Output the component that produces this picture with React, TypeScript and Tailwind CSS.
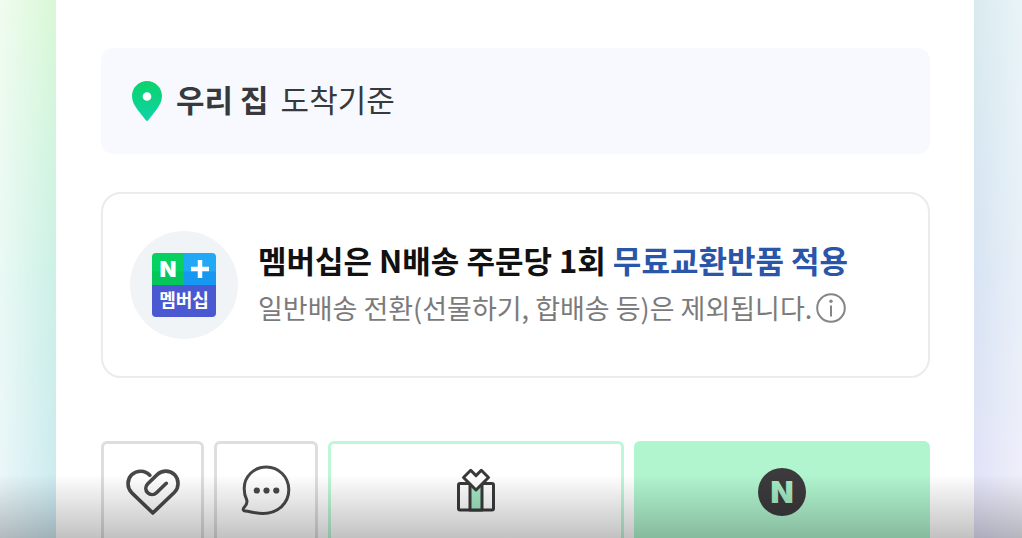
import React from "react";

function PinIcon() {
  return (
    <svg width="30" height="40" viewBox="0 0 30 40" aria-hidden="true" className="shrink-0">
      <defs>
        <linearGradient id="pin" x1="0" y1="0" x2="0" y2="1">
          <stop offset="0" stopColor="#0bd36c" />
          <stop offset="1" stopColor="#0fd3a8" />
        </linearGradient>
      </defs>
      <path
        fill="url(#pin)"
        d="M15 0C6.700 0 0 6.700 0 15c0 5 2.200 9 5.200 13.200L13.800 39.200a1.500 1.500 0 0 0 2.400 0L24.800 28.200C27.800 24 30 20 30 15 30 6.700 23.300 0 15 0Z"
      />
      <circle cx="15" cy="15.500" r="4.300" fill="#fff" />
    </svg>
  );
}

function InfoIcon() {
  return (
    <svg width="30" height="30" viewBox="0 0 30 30" fill="none" aria-hidden="true">
      <circle cx="15" cy="15" r="13.800" stroke="#858585" strokeWidth="2" />
      <circle cx="15" cy="8.200" r="1.700" fill="#858585" />
      <path d="M15 12.500v11" stroke="#858585" strokeWidth="2" />
    </svg>
  );
}

function HeartIcon() {
  return (
    <svg width="54" height="46" viewBox="0 0 54 46" fill="none" stroke="#484848" strokeWidth="3.600" strokeLinecap="round" strokeLinejoin="round" aria-hidden="true">
      <path d="M23.800 6.200C19 1.100 11 .9 5.800 5.600C.8 10.800.8 18.500 5.600 23.600L26.800 44L48.500 23.300C53.200 18.500 53.200 10.500 48.500 5.600C43.600 1 36.200 1 31.500 5.400L21.800 14.800C19.200 17.400 19.200 21.300 21.700 23.800C24.200 26.200 28 26.100 30.500 23.700L40.300 14.300" />
    </svg>
  );
}

function ChatIcon() {
  return (
    <svg width="50" height="50" viewBox="0 0 50 50" fill="none" aria-hidden="true">
      <path
        d="M25.500 2C12.800 2 3.200 11.500 3.200 23.500C3.200 28.500 4 31.500 5.600 34.500C7.200 38.200 4.600 40.500 2.800 42.800C1.700 44.500 2.200 45.900 4.200 46.100C9.500 46.700 15 48.500 22 48.500C36.500 48.500 47.800 38.500 47.800 24.800C47.800 11.800 37.500 2 25.500 2Z"
        stroke="#484848"
        strokeWidth="3"
        strokeLinejoin="round"
      />
      <g fill="#484848">
        <circle cx="15.800" cy="25.500" r="3.100" />
        <circle cx="25.500" cy="25.500" r="3.100" />
        <circle cx="35.300" cy="25.500" r="3.100" />
      </g>
    </svg>
  );
}

function GiftIcon() {
  return (
    <svg width="38" height="44" viewBox="0 0 38 44" fill="none" stroke="#3a3a3a" strokeWidth="3" strokeLinejoin="round" aria-hidden="true">
      <rect x="1.500" y="15.500" width="35" height="26.500" rx="1.500" />
      <path d="M13 15.500h12v26.500H13z" fill="#a4e8c3" />
      <path d="M19 7.600L13.700 2.300L6.500 9.500L19 22L31.500 9.500L24.300 2.300Z" fill="#fff" />
    </svg>
  );
}

function MembershipLogo() {
  return (
    <div className="flex size-[108px] shrink-0 items-center justify-center rounded-full bg-[#f1f4f6]">
      <div className="grid size-16 grid-cols-2 grid-rows-2 overflow-hidden rounded-sm text-white">
        <span className="flex items-center justify-center bg-linear-to-b from-[#06d160] from-55% to-[#05c658] to-60% font-['Inter',sans-serif] text-[22px] leading-none font-black">
          N
        </span>
        <span className="flex items-center justify-center bg-linear-to-b from-[#22a8f4] from-55% to-[#1597f2] to-60%">
          <svg width="18" height="18" viewBox="0 0 18 18" aria-hidden="true">
            <path d="M9 0v18M0 9h18" stroke="#fff" strokeWidth="4.500" />
          </svg>
        </span>
        <span className="col-span-2 flex items-center justify-center bg-[#4a58d2] pb-1 text-[18px] leading-none font-bold">
          멤버십
        </span>
      </div>
    </div>
  );
}

const action = "flex h-[102px] items-center justify-center rounded-md border-[3px]";

export default function App() {
  return (
    <div className="relative grid h-screen grid-cols-[56px_1fr_48px] overflow-hidden bg-white font-['Noto_Sans_CJK_KR',sans-serif]">
      <div className="bg-linear-to-b from-[#d9f8d6] via-[#cbf1e6] to-[#cde9f2]">
        <div className="h-full bg-linear-to-r from-white/60 to-white/0" />
      </div>

      <main className="pt-12 pr-11 pl-[45px]">
        <section className="flex h-[106px] items-center gap-3.5 rounded-xl bg-[#f7f9fe] px-[31px] text-[31px] leading-10 text-[#38393c]">
          <PinIcon />
          <p className="pb-1">
            <strong className="mr-3 font-bold">우리 집</strong>
            <span>도착기준</span>
          </p>
        </section>

        <section className="mt-[38px] flex items-center gap-5 rounded-[20px] border-2 border-[#e9ebec] px-[27px] py-[37px] whitespace-nowrap">
          <MembershipLogo />
          <div className="flex flex-col gap-0.5 pb-0.5">
            <h2 className="text-[31px] leading-[46px] font-bold text-[#111]">
              멤버십은 N배송 주문당 1회 <span className="text-[#2a55a8]">무료교환반품 적용</span>
            </h2>
            <div className="flex items-center gap-1 text-[27px] leading-[46px] text-[#7b7b7b]">
              <p>일반배송 전환(선물하기, 합배송 등)은 제외됩니다.</p>
              <button type="button" aria-label="안내">
                <InfoIcon />
              </button>
            </div>
          </div>
        </section>

        <div className="mt-[63px] grid grid-cols-[103px_104px_1fr_1fr] gap-2.5">
          <button type="button" aria-label="찜하기" className={`${action} border-[#dedede]`}>
            <HeartIcon />
          </button>
          <button type="button" aria-label="문의하기" className={`${action} border-[#dedede] pb-1`}>
            <ChatIcon />
          </button>
          <button type="button" aria-label="선물하기" className={`${action} border-[#bdf6d8] pb-1`}>
            <GiftIcon />
          </button>
          <button type="button" className={`${action} border-[#b1f5cf] bg-[#b1f5cf]`}>
            <span className="flex size-12 items-center justify-center rounded-full bg-[#3c3a3c] font-['Inter',sans-serif] text-[30px] leading-none font-black text-[#a5eac5]">
              N
            </span>
          </button>
        </div>
      </main>

      <div className="bg-linear-to-b from-[#d8ebef] via-[#d7e4f3] to-[#e4e2f8]">
        <div className="h-full bg-linear-to-r from-white/0 to-white/45" />
      </div>

      <div className="pointer-events-none absolute inset-x-0 bottom-0 h-16 bg-linear-to-b from-black/0 to-black/24" />
    </div>
  );
}
